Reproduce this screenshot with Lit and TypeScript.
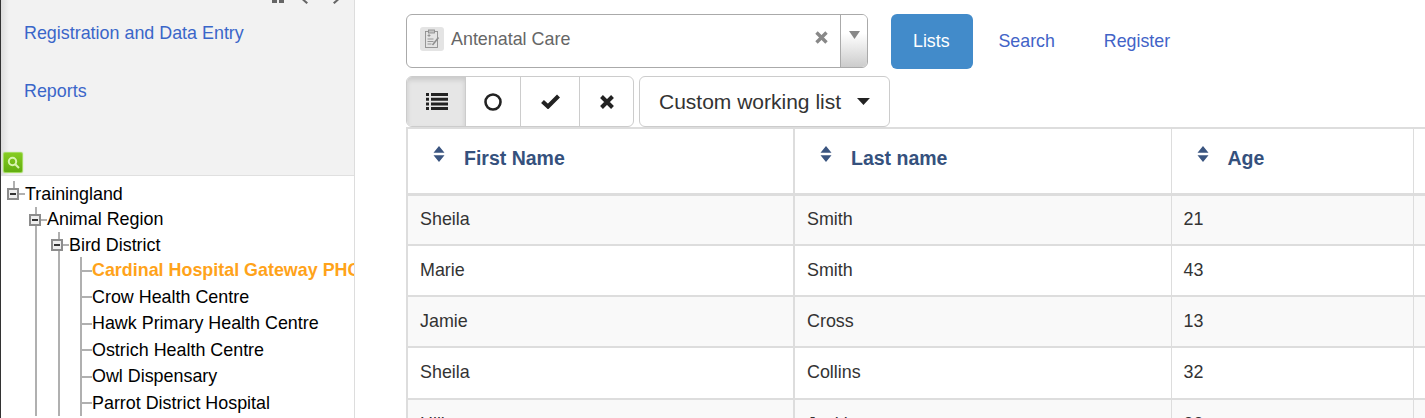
import { LitElement, css, html, svg } from "lit";
import { customElement } from "lit/decorators.js";

interface TreeRow {
  label: string
  depth: number
  expanded?: boolean
  selected?: boolean
}

const tree: TreeRow[] = [
  { label: "Trainingland", depth: 0, expanded: true },
  { label: "Animal Region", depth: 1, expanded: true },
  { label: "Bird District", depth: 2, expanded: true },
  { label: "Cardinal Hospital Gateway PHC", depth: 3, selected: true },
  { label: "Crow Health Centre", depth: 3 },
  { label: "Hawk Primary Health Centre", depth: 3 },
  { label: "Ostrich Health Centre", depth: 3 },
  { label: "Owl Dispensary", depth: 3 },
  { label: "Parrot District Hospital", depth: 3 },
];

const people = [
  ["Sheila", "Smith", "21"],
  ["Marie", "Smith", "43"],
  ["Jamie", "Cross", "13"],
  ["Sheila", "Collins", "32"],
  ["Hillary", "Jackie", "33"],
];

const sortIcon = svg`<svg class="sort" width="12" height="16" viewBox="0 0 12 16"><path d="M6 0l5.500 6.800H.5zM.5 9.200h11L6 16z" fill="#3b5580"/></svg>`;

@customElement("app-root")
export class AppRoot extends LitElement {
  static styles = css`
    :host {
      display: flex;
      width: 1425px;
      height: 418px;
      overflow: hidden;
      background: #fff;
      font-family: "Liberation Sans", Arial, sans-serif;
      font-size: 17.9px;
      color: #333;
    }

    .side {
      width: 355px;
      flex: none;
      box-sizing: border-box;
      border-right: 1px solid #ddd;
      border-left: 1px solid #333;
      display: flex;
      flex-direction: column;
    }

    .menu {
      height: 176px;
      flex: none;
      box-sizing: border-box;
      background: linear-gradient(90deg, #ddd, #f2f2f2 8px);
      border-bottom: 1px solid #e0e0e0;
      padding: 23px 0 0 23px;
      display: flex;
      flex-direction: column;
      gap: 38px;
      position: relative;
    }

    .menu a {
      color: #3a66c9;
      line-height: 20px;
    }

    .clipped-tools {
      position: absolute;
      left: 270px;
      top: 0;
    }

    .find {
      position: absolute;
      left: 2px;
      top: 152px;
      width: 20px;
      height: 21px;
      box-sizing: border-box;
      background: linear-gradient(#86cc22, #62ad10);
      border: 1px solid #a4dc62;
      border-radius: 2px;
      box-shadow: 0 0 1px #8bc34a;
      display: flex;
      align-items: center;
      justify-content: center;
    }

    .tree {
      flex: 1;
      overflow: hidden;
      padding-top: 5.25px;
      white-space: nowrap;
      color: #000;
    }

    .node {
      height: 25.5px;
      display: flex;
      align-items: center;
      position: relative;
    }

    .node.leaf {
      height: 26.5px;
    }

    .node.selected {
      margin-top: -0.5px;
      color: #ffa31a;
      font-weight: 700;
    }

    .guide {
      position: absolute;
      top: 0;
      bottom: 0;
      width: 2px;
      background: #b0b0b0;
    }

    .guide.stub {
      bottom: 50%;
    }

    .toggle {
      width: 12px;
      height: 12px;
      box-sizing: border-box;
      flex: none;
      border: 2px solid #8c8c8c;
      background: #eee;
      display: flex;
      align-items: center;
      justify-content: center;
      z-index: 1;
    }

    .toggle::after {
      content: "";
      width: 6px;
      height: 2px;
      background: #333;
    }

    .tick {
      width: 6px;
      height: 2px;
      background: #b0b0b0;
      flex: none;
      z-index: 1;
    }

    .leaf .tick {
      width: 11px;
    }

    .main {
      flex: 1;
      min-width: 0;
      padding: 14px 0 0 51px;
    }

    .top {
      display: flex;
      align-items: flex-start;
    }

    .program {
      width: 462px;
      height: 54px;
      box-sizing: border-box;
      border: 1px solid #aaa;
      border-radius: 6px;
      display: flex;
      align-items: stretch;
      overflow: hidden;
      color: #666;
    }

    .program .value {
      flex: 1;
      display: flex;
      align-items: center;
      gap: 7px;
      padding: 0 0 4px 13px;
    }

    .prog-icon {
      width: 24px;
      height: 24px;
      background: #e4e4e4;
      border-radius: 3px;
      display: flex;
      align-items: center;
      justify-content: center;
    }

    .clear {
      margin-left: auto;
      margin-right: 12px;
      margin-bottom: 3px;
      display: flex;
    }

    .arrow {
      width: 27px;
      box-sizing: border-box;
      border-left: 1px solid #aaa;
      background: linear-gradient(#fff 35%, #ccc);
      display: flex;
      justify-content: center;
      padding-top: 16px;
    }

    .tabs {
      display: flex;
      margin-left: 23px;
      gap: 2px;
      font-size: 17.8px;
    }

    .tabs a {
      height: 55px;
      box-sizing: border-box;
      padding: 0 23.5px;
      display: flex;
      align-items: center;
      border-radius: 6px;
      color: #4263c7;
    }

    .tabs a.active {
      width: 82px;
      padding: 0 22px;
      background: #428bca;
      color: #fff;
    }

    .tools {
      display: flex;
      gap: 5px;
      margin-top: 7px;
    }

    .group {
      display: flex;
      height: 51px;
      box-sizing: border-box;
      border: 1px solid #ccc;
      border-radius: 6px;
      overflow: hidden;
    }

    .group button {
      all: unset;
      box-sizing: border-box;
      display: flex;
      align-items: center;
      justify-content: center;
      height: 100%;
      color: #222;
    }

    .group button + button {
      border-left: 1px solid #ccc;
    }

    .group button.on {
      padding-left: 2px;
      background: #e6e6e6;
      box-shadow: inset 0 3px 5px rgba(0, 0, 0, 0.125);
    }

    .dropdown {
      width: 251px;
      padding: 0 19px;
      gap: 16px;
      font-size: 21px;
      color: #333;
      display: flex;
      align-items: center;
      white-space: nowrap;
    }

    table {
      width: 1200px;
      border-collapse: collapse;
      table-layout: fixed;
    }

    th {
      height: 66px;
      box-sizing: border-box;
      padding: 0 0 4px 25px;
      text-align: left;
      color: #35517d;
      font-size: 19.5px;
      border: 1px solid #ddd;
      border-top-width: 2px;
      border-bottom-width: 3px;
      font-weight: 700;
    }

    th:first-child,
    td:first-child,
    th:nth-child(2),
    td:nth-child(2) {
      border-left-width: 2px;
    }

    th span {
      display: flex;
      align-items: center;
      gap: 19px;
    }

    .sort {
      margin-top: -10px;
      flex: none;
    }

    td {
      height: 51px;
      box-sizing: border-box;
      padding: 0 12px;
      border: 1px solid #ddd;
      border-bottom-width: 2px;
    }

    tbody tr:nth-child(odd) {
      background: #f9f9f9;
    }

    tbody tr:nth-child(4) td {
      height: 52px;
      padding-bottom: 2px;
    }
  `;

  renderNode(row: TreeRow) {
    const guides = [];
    for (let i = Math.min(row.depth, 1); i <= row.depth; i++) {
      const stub = row.depth === 0;
      guides.push(html`<i class="guide ${stub ? "stub" : ""}" style="left:${11.5 + i * 22.5}px"></i>`);
    }
    const indent = row.expanded ? 6 + row.depth * 22 : 80;
    const classes = ["node", row.expanded ? "" : "leaf", row.selected ? "selected" : ""].join(" ");
    return html`<div class=${classes}>
      ${guides}
      <span style="width:${indent}px;flex:none"></span>
      ${row.expanded ? html`<i class="toggle"></i>` : ""}
      <i class="tick"></i>
      <span>${row.label}</span>
    </div>`;
  }

  render() {
    return html`
      <aside class="side">
        <nav class="menu">
          <svg class="clipped-tools" width="72" height="5" viewBox="0 0 72 5" fill="#666">
            <rect x="1" y="0" width="5" height="3" />
            <rect x="8" y="0" width="5" height="3" />
            <path d="M31 0h3l3 2.500-1.500 1.500zM68 0h-3l-3 2.500 1.500 1.500z" />
          </svg>
          <a>Registration and Data Entry</a>
          <a>Reports</a>
          <div class="find">
            <svg width="13" height="13" viewBox="0 0 13 13" fill="none" stroke="#d8f5b0" stroke-width="2"><circle cx="5.500" cy="5.500" r="3.700"/><path d="M8.200 8.200L12 12"/></svg>
          </div>
        </nav>
        <div class="tree">${tree.map((row) => this.renderNode(row))}</div>
      </aside>
      <main class="main">
        <div class="top">
          <div class="program">
            <div class="value">
              <span class="prog-icon">
                <svg width="18" height="20" viewBox="0 0 18 20" fill="none" stroke="#8f8f8f" stroke-width="0.900"><rect x="2.500" y="2.500" width="12" height="16"/><rect x="5.500" y="1" width="6" height="3" fill="#c4c4c4"/><path d="M4.500 6.500h3M6 5v3M4.500 10h6M4.500 12.500h6M4.500 15h4"/><path d="M9.500 16l6-7.500" stroke-width="1.600"/></svg>
              </span>
              <span>Antenatal Care</span>
              <span class="clear">
                <svg width="13" height="13" viewBox="0 0 13 13" stroke="#888" stroke-width="3.400"><path d="M1.500 1.500l10 10M11.500 1.500l-10 10"/></svg>
              </span>
            </div>
            <div class="arrow">
              <svg width="11" height="8" viewBox="0 0 11 8"><path d="M0 0h11L5.500 8z" fill="#888"/></svg>
            </div>
          </div>
          <div class="tabs">
            <a class="active">Lists</a>
            <a>Search</a>
            <a>Register</a>
          </div>
        </div>
        <div class="tools">
          <div class="group">
            <button class="on" style="width:58px" aria-label="All">
              <svg width="22" height="17" viewBox="0 0 22 17" fill="#222"><path d="M0 0h3v3H0zM5 0h17v3H5zM0 4.700h3v3H0zM5 4.700h17v3H5zM0 9.400h3v3H0zM5 9.400h17v3H5zM0 14h3v3H0zM5 14h17v3H5z"/></svg>
            </button>
            <button style="width:55px" aria-label="Open">
              <svg width="18" height="18" viewBox="0 0 18 18" fill="none" stroke="#222" stroke-width="2.600"><circle cx="9" cy="9" r="7.500"/></svg>
            </button>
            <button style="width:59px" aria-label="Completed">
              <svg width="19" height="15" viewBox="0 0 19 15" fill="none" stroke="#222" stroke-width="4.200"><path d="M1.500 7.500l5.500 5L17.500 2"/></svg>
            </button>
            <button style="width:54px" aria-label="Skipped">
              <svg width="14" height="14" viewBox="0 0 14 14" stroke="#222" stroke-width="4"><path d="M1.500 1.500l11 11M12.500 1.500l-11 11"/></svg>
            </button>
          </div>
          <div class="group dropdown">
            <span>Custom working list</span>
            <svg width="13" height="7" viewBox="0 0 13 7"><path d="M0 0h13L6.500 7z" fill="#222"/></svg>
          </div>
        </div>
        <table>
          <colgroup>
            <col style="width:387px" />
            <col style="width:377px" />
            <col style="width:242px" />
            <col />
          </colgroup>
          <thead>
            <tr>
              <th><span>${sortIcon}First Name</span></th>
              <th><span>${sortIcon}Last name</span></th>
              <th><span>${sortIcon}Age</span></th>
              <th></th>
            </tr>
          </thead>
          <tbody>
            ${people.map(
              (p) => html`<tr><td>${p[0]}</td><td>${p[1]}</td><td>${p[2]}</td><td></td></tr>`,
            )}
          </tbody>
        </table>
      </main>
    `;
  }
}
